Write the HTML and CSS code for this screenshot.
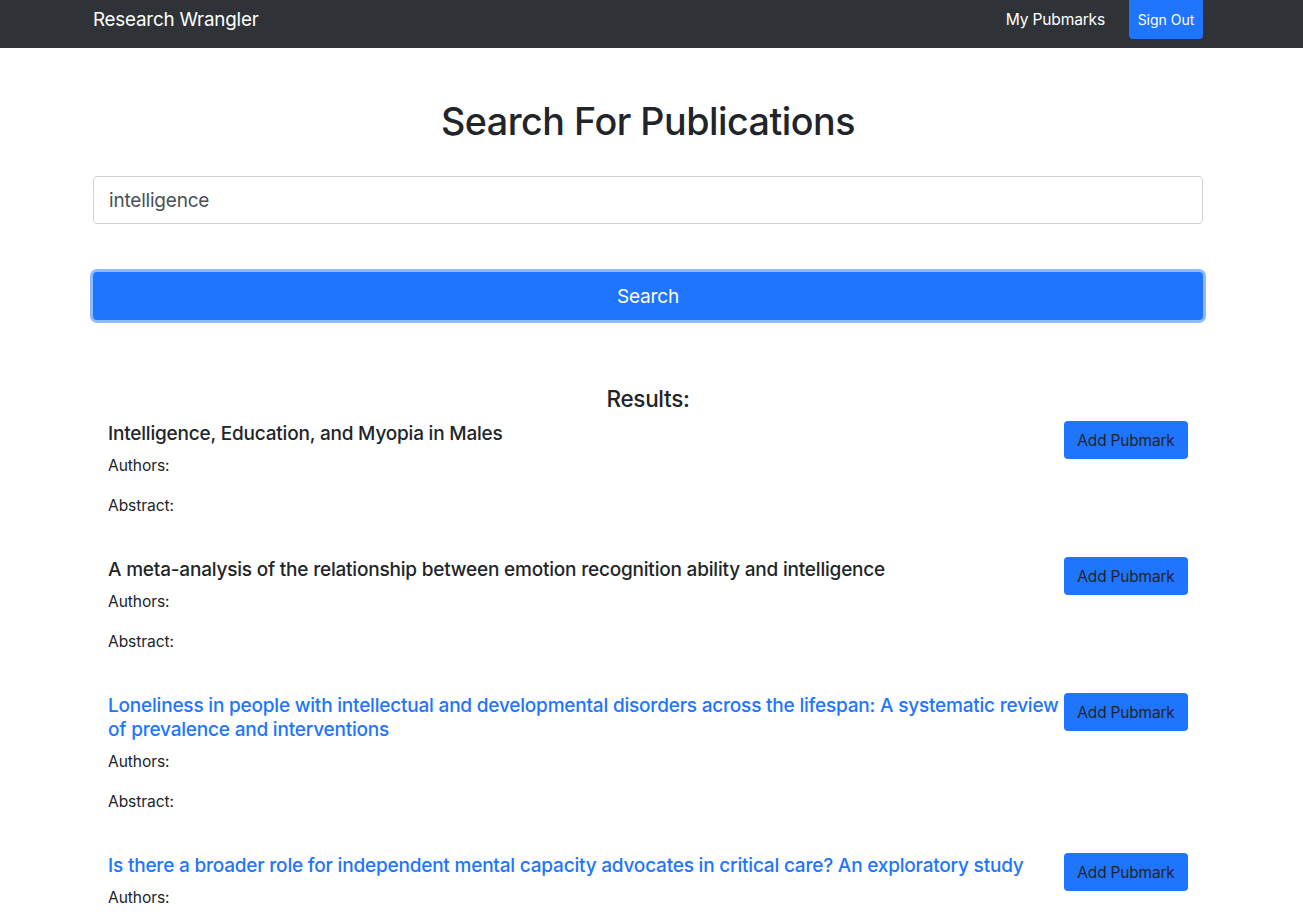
FILE: index.html
```html
<!DOCTYPE html>
<html lang="en">
<head>
<meta charset="utf-8">
<title>Research Wrangler</title>
<link rel="stylesheet" href="styles.css">
</head>
<body>
<nav class="navbar">
  <div class="container nav-inner">
    <a class="brand" href="#">Research Wrangler</a>
    <div class="nav-right">
      <a class="nav-link" href="#">My Pubmarks</a>
      <button class="btn-signout">Sign Out</button>
    </div>
  </div>
</nav>
<main class="container">
  <h1 class="page-title">Search For Publications</h1>
  <input class="search-input" type="text" value="intelligence">
  <button class="search-btn">Search</button>
  <h5 class="results-title">Results:</h5>
  <ul class="results">
    <li class="result">
      <div class="result-body">
        <h5 class="result-title">Intelligence, Education, and Myopia in Males</h5>
        <p class="meta">Authors:</p>
        <p class="meta">Abstract:</p>
      </div>
      <button class="add-btn">Add Pubmark</button>
    </li>
    <li class="result">
      <div class="result-body">
        <h5 class="result-title">A meta-analysis of the relationship between emotion recognition ability and intelligence</h5>
        <p class="meta">Authors:</p>
        <p class="meta">Abstract:</p>
      </div>
      <button class="add-btn">Add Pubmark</button>
    </li>
    <li class="result">
      <div class="result-body">
        <h5 class="result-title link">Loneliness in people with intellectual and developmental disorders across the lifespan: A systematic review of prevalence and interventions</h5>
        <p class="meta">Authors:</p>
        <p class="meta">Abstract:</p>
      </div>
      <button class="add-btn">Add Pubmark</button>
    </li>
    <li class="result">
      <div class="result-body">
        <h5 class="result-title link">Is there a broader role for independent mental capacity advocates in critical care? An exploratory study</h5>
        <p class="meta">Authors:</p>
        <p class="meta">Abstract:</p>
      </div>
      <button class="add-btn">Add Pubmark</button>
    </li>
  </ul>
</main>
</body>
</html>
```

FILE: styles.css
```css
* { box-sizing: border-box; }
html, body { margin: 0; padding: 0; }
body {
  font-family: Inter, "Helvetica Neue", Arial, sans-serif;
  color: #212529;
  background: #fff;
  font-size: 16px;
  line-height: 1.5;
  overflow: hidden;
}
.container {
  width: 1110px;
  margin-left: calc((100% - 1117px) / 2);
}
.navbar {
  background: #2f3337;
  height: 48px;
}
.nav-inner {
  display: flex;
  justify-content: space-between;
  align-items: flex-start;
  height: 48px;
}
.brand {
  color: #fff;
  text-decoration: none;
  font-size: 18.8px;
  line-height: 40px;
  letter-spacing: -0.2px;
}
.nav-right {
  display: flex;
  align-items: flex-start;
  gap: 24px;
}
.nav-link {
  color: #fff;
  text-decoration: none;
  font-size: 15.6px;
  line-height: 40px;
  letter-spacing: -0.2px;
}
.btn-signout {
  background: #2075fe;
  color: #fff;
  border: 0;
  border-radius: 0 0 4px 4px;
  height: 39px;
  width: 74px;
  font-family: inherit;
  font-size: 14px;
  padding: 0;
}
.page-title {
  text-align: center;
  font-size: 37.7px;
  font-weight: 500;
  line-height: 48px;
  margin: 49px 0 31px;
  letter-spacing: -0.5px;
}
.search-input {
  display: block;
  width: 100%;
  height: 48px;
  border: 1px solid #ced4da;
  border-radius: 4px;
  padding: 8px 16px 8px 15px;
  font-family: inherit;
  font-size: 19px;
  line-height: 30px;
  color: #495057;
  letter-spacing: -0.2px;
}
.search-btn {
  display: block;
  width: 100%;
  height: 48px;
  margin-top: 48px;
  background: #2075fe;
  color: #fff;
  border: 0;
  border-radius: 4px;
  font-family: inherit;
  font-size: 19px;
  box-shadow: 0 0 0 3px rgba(33, 118, 255, 0.5);
  letter-spacing: -0.2px;
}
.results-title {
  text-align: center;
  font-size: 22.5px;
  font-weight: 500;
  line-height: 24px;
  margin: 67px 0 10px;
  letter-spacing: -0.3px;
}
.results {
  list-style: none;
  margin: 0;
  padding: 0 15px;
}
.result {
  display: flex;
  align-items: flex-start;
  margin-bottom: 23px;
}
.result-body {
  flex: 1;
  min-width: 0;
}
.result-title {
  font-size: 19px;
  font-weight: 500;
  line-height: 24px;
  margin: 0 0 8px;
  padding-top: 1px;
  letter-spacing: -0.2px;
}
.result-title.link { color: #2075fe; }
.meta {
  margin: 0 0 16px;
  font-size: 15.6px;
  line-height: 24px;
  letter-spacing: -0.1px;
}
.add-btn {
  flex: none;
  width: 124px;
  height: 38px;
  background: #2075fe;
  color: #212529;
  border: 0;
  border-radius: 4px;
  font-family: inherit;
  font-size: 15.5px;
  padding: 0;
  letter-spacing: -0.2px;
}
```
